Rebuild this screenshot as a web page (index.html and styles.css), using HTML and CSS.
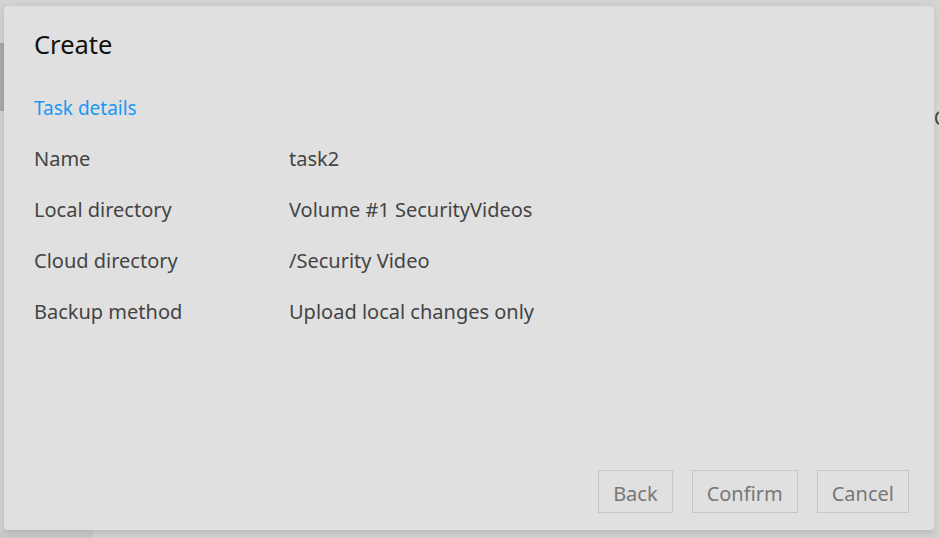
FILE: index.html
```html
<!DOCTYPE html>
<html>
<head>
<meta charset="utf-8">
<link rel="stylesheet" href="styles.css">
</head>
<body>
<div class="backdrop">
  <div class="bg-left"><div class="bg-left-dark"></div></div>
  <div class="bg-right"><span class="bg-arc"></span></div>
  <div class="bg-bottom"><div class="bg-bottom-dark"></div></div>
</div>
<div class="dialog">
  <h1 class="title">Create</h1>
  <div class="section">Task details</div>
  <div class="rows">
    <div class="row"><span class="label">Name</span><span class="value">task2</span></div>
    <div class="row"><span class="label">Local directory</span><span class="value">Volume #1 SecurityVideos</span></div>
    <div class="row"><span class="label">Cloud directory</span><span class="value">/Security Video</span></div>
    <div class="row"><span class="label">Backup method</span><span class="value">Upload local changes only</span></div>
  </div>
  <div class="actions">
    <button class="btn">Back</button>
    <button class="btn">Confirm</button>
    <button class="btn">Cancel</button>
  </div>
</div>
</body>
</html>
```

FILE: styles.css
```css
* { box-sizing: border-box; }
html, body { margin: 0; padding: 0; }
body {
  width: 939px;
  height: 538px;
  overflow: hidden;
  background: #d2d2d2;
  font-family: "Noto Sans", "Open Sans", sans-serif;
  position: relative;
}
.backdrop { position: absolute; inset: 0; }
.bg-left { position: absolute; left: 0; top: 0; width: 4px; height: 538px; background: #d2d2d2; }
.bg-left-dark { position: absolute; left: 0; top: 43px; width: 4px; height: 68px; background: #a9a9a9; }
.bg-right { position: absolute; right: 0; top: 0; width: 5px; height: 538px; background: #d6d6d6; overflow: hidden; }
.bg-arc {
  position: absolute;
  left: 1px;
  top: 111px;
  width: 10px;
  height: 14px;
  border: 2px solid #4a4a4a;
  border-radius: 50%;
}
.bg-bottom { position: absolute; left: 0; bottom: 0; width: 939px; height: 8px; background: #d0d0d0; }
.bg-bottom-dark { position: absolute; left: 0; top: 0; width: 93px; height: 8px; background: #c8c8c8; }

.dialog {
  position: absolute;
  left: 4px;
  top: 6px;
  width: 930px;
  height: 524px;
  background: #e0e0e0;
  border-radius: 4px;
  box-shadow: 0 2px 6px rgba(0,0,0,0.12);
  padding: 22px 25px 17px 30px;
  display: flex;
  flex-direction: column;
}
.title {
  margin: 0;
  font-size: 25.5px;
  font-weight: 400;
  color: #111;
  line-height: 32px;
}
.section {
  margin-top: 35px;
  font-size: 19px;
  color: #1899f5;
  line-height: 26px;
}
.rows { margin-top: 25px; display: flex; flex-direction: column; }
.row { display: flex; height: 51px; align-items: flex-start; font-size: 20px; line-height: 26px; color: #444; }
.label { width: 255px; }
.value { color: #444; }
.actions {
  margin-top: auto;
  display: flex;
  justify-content: flex-end;
  gap: 19px;
}
.btn {
  height: 43px;
  padding: 3px 14px 0 14px;
  background: transparent;
  border: 1px solid #c6c6c6;
  border-radius: 0;
  font-family: inherit;
  font-size: 20px;
  color: #777;
}
```
